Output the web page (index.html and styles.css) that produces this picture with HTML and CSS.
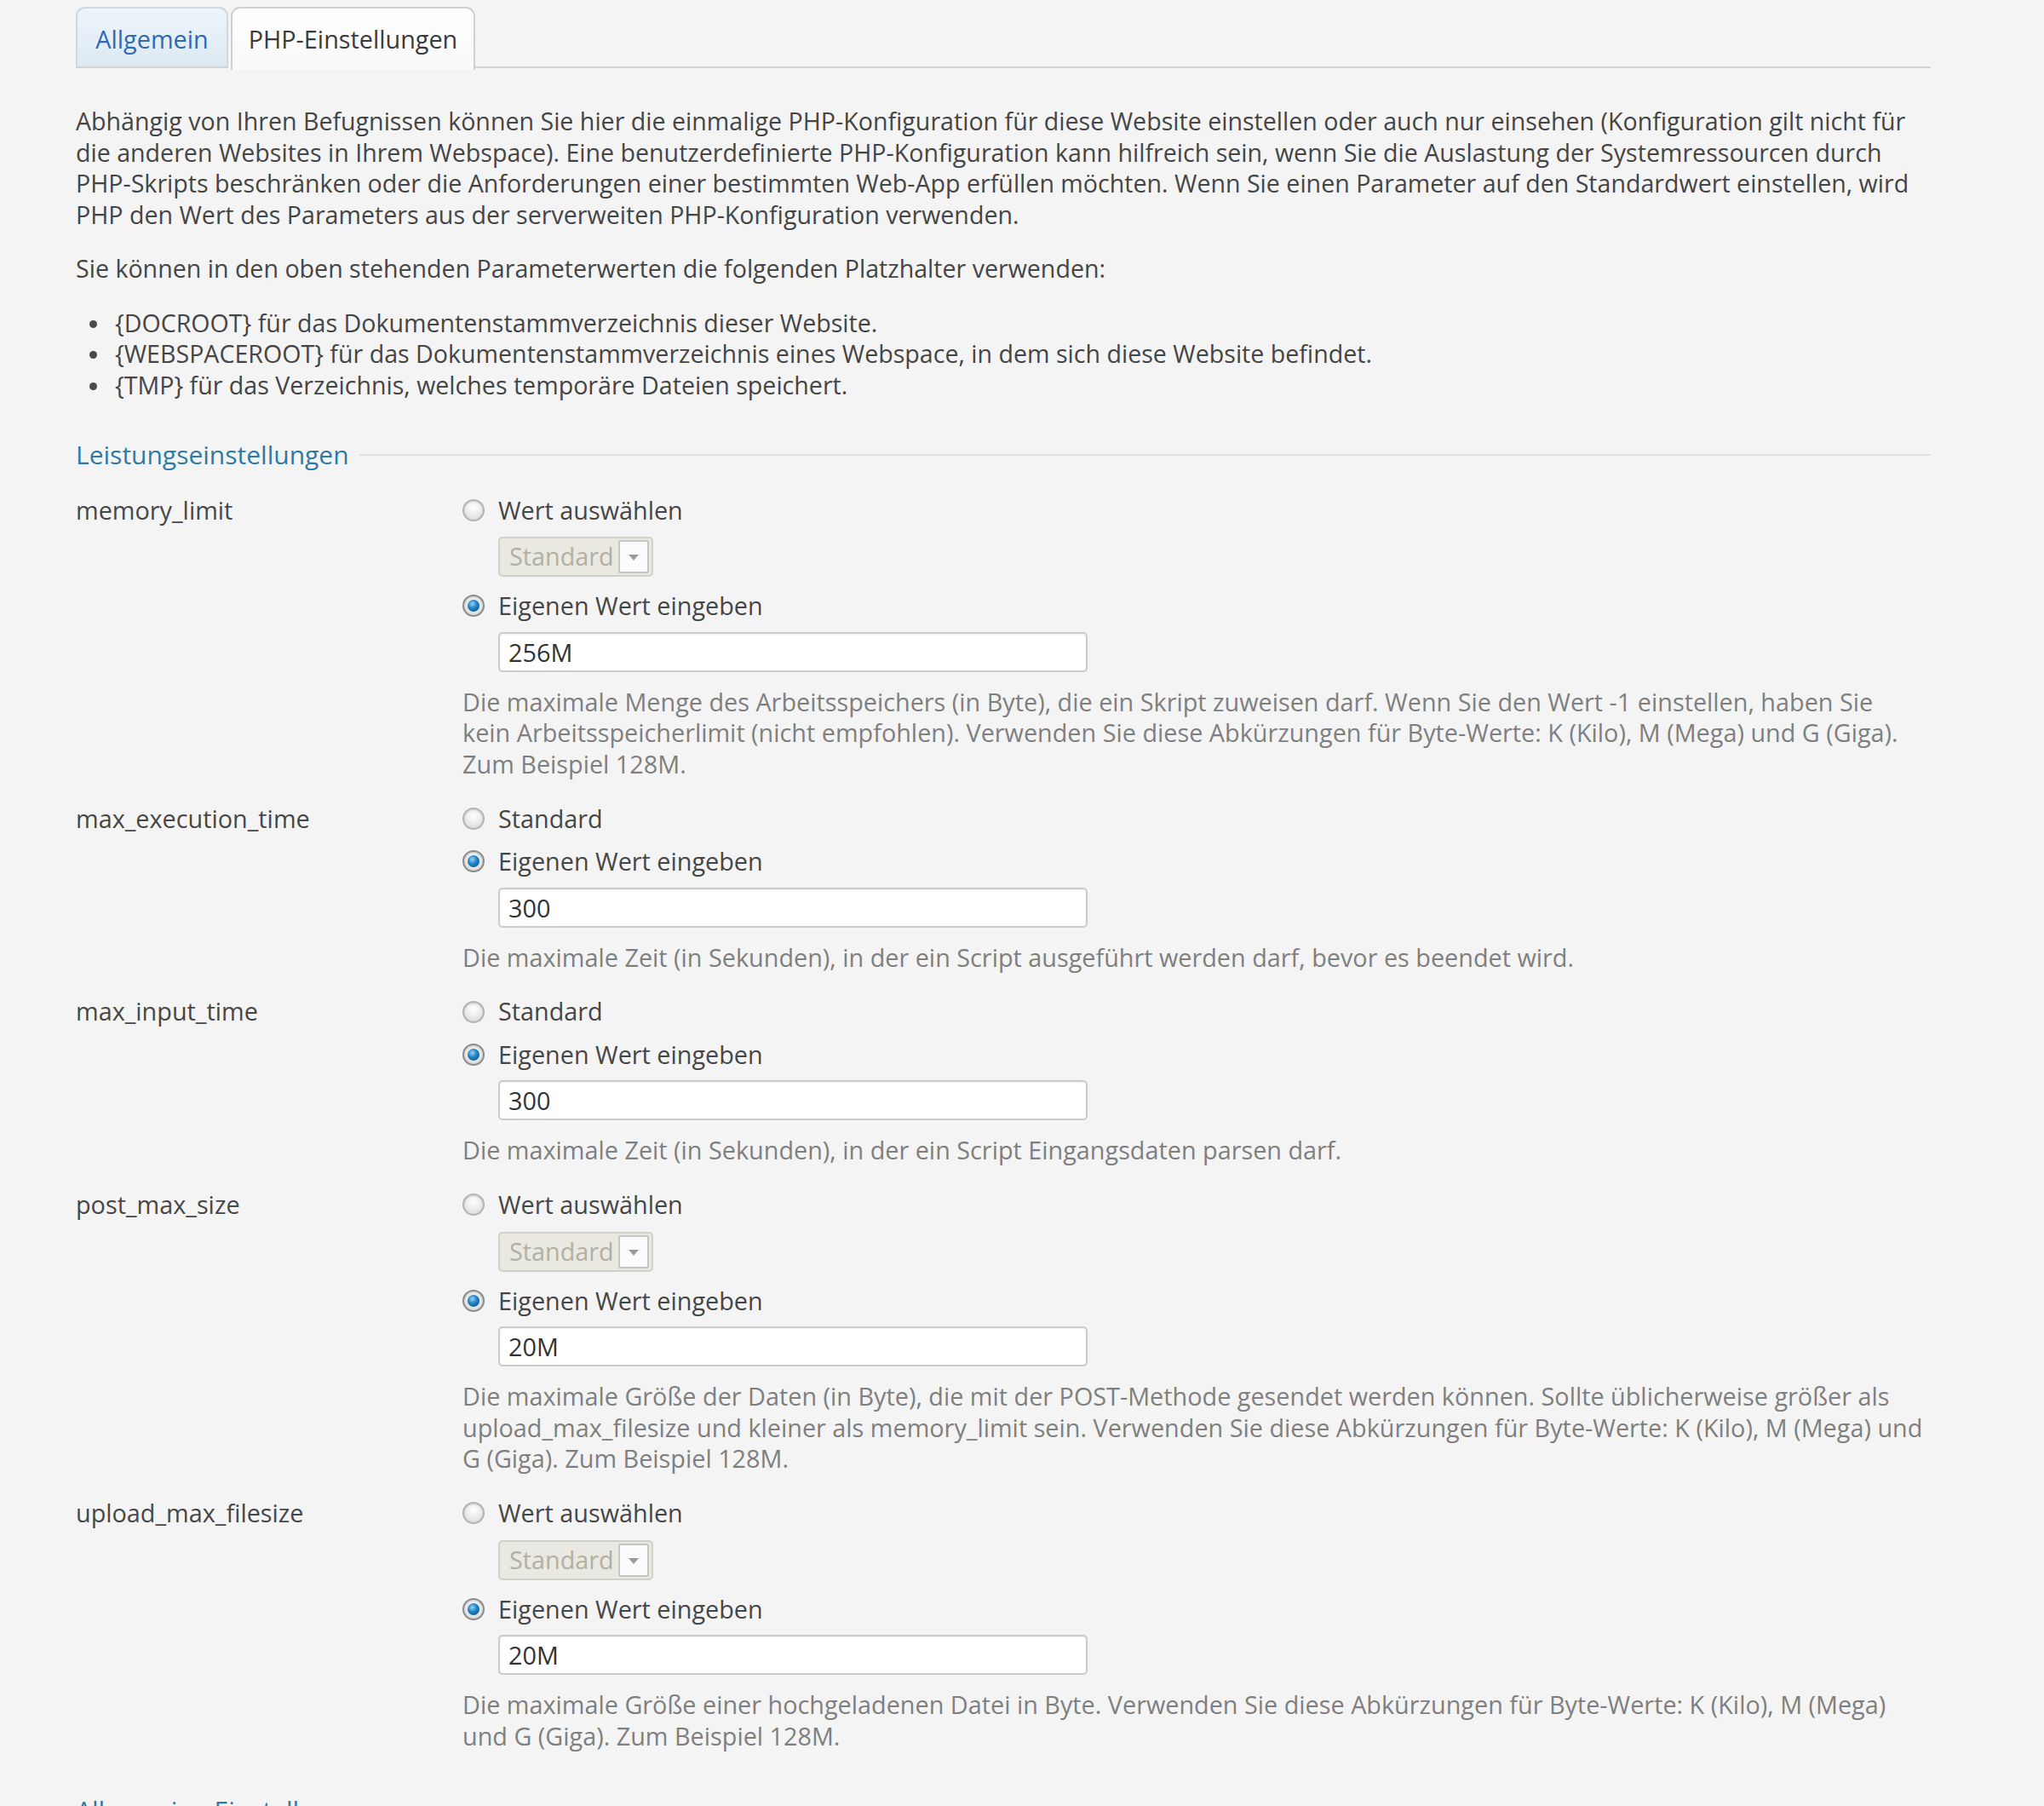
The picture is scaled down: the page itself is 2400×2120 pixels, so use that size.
FILE: index.html
```html
<!DOCTYPE html>
<html lang="de">
<head>
<meta charset="utf-8">
<title>PHP-Einstellungen</title>
<link rel="stylesheet" href="styles.css">
</head>
<body>
<div class="page">
  <div class="tabs">
    <a class="tab tab-inactive" href="#">Allgemein</a>
    <a class="tab tab-active" href="#">PHP-Einstellungen</a>
    <div class="tab-line"></div>
  </div>

  <p class="intro">Abhängig von Ihren Befugnissen können Sie hier die einmalige PHP-Konfiguration für diese Website einstellen oder auch nur einsehen (Konfiguration gilt nicht für die anderen Websites in Ihrem Webspace). Eine benutzerdefinierte PHP-Konfiguration kann hilfreich sein, wenn Sie die Auslastung der Systemressourcen durch PHP-Skripts beschränken oder die Anforderungen einer bestimmten Web-App erfüllen möchten. Wenn Sie einen Parameter auf den Standardwert einstellen, wird PHP den Wert des Parameters aus der serverweiten PHP-Konfiguration verwenden.</p>
  <p class="intro intro-2">Sie können in den oben stehenden Parameterwerten die folgenden Platzhalter verwenden:</p>
  <ul class="placeholders">
    <li>{DOCROOT} für das Dokumentenstammverzeichnis dieser Website.</li>
    <li>{WEBSPACEROOT} für das Dokumentenstammverzeichnis eines Webspace, in dem sich diese Website befindet.</li>
    <li>{TMP} für das Verzeichnis, welches temporäre Dateien speichert.</li>
  </ul>

  <div class="section-title"><span>Leistungseinstellungen</span></div>

  <div class="row">
    <div class="label">memory_limit</div>
    <div class="field">
      <div class="opt"><span class="radio"></span>Wert auswählen</div>
      <div class="select"><span class="select-text">Standard</span><span class="select-arrow"></span></div>
      <div class="opt"><span class="radio radio-on"></span>Eigenen Wert eingeben</div>
      <div class="input">256M</div>
      <p class="hint">Die maximale Menge des Arbeitsspeichers (in Byte), die ein Skript zuweisen darf. Wenn Sie den Wert -1 einstellen, haben Sie<br>kein Arbeitsspeicherlimit (nicht empfohlen). Verwenden Sie diese Abkürzungen für Byte-Werte: K (Kilo), M (Mega) und G (Giga).<br>Zum Beispiel 128M.</p>
    </div>
  </div>

  <div class="row">
    <div class="label">max_execution_time</div>
    <div class="field">
      <div class="opt"><span class="radio"></span>Standard</div>
      <div class="opt"><span class="radio radio-on"></span>Eigenen Wert eingeben</div>
      <div class="input">300</div>
      <p class="hint">Die maximale Zeit (in Sekunden), in der ein Script ausgeführt werden darf, bevor es beendet wird.</p>
    </div>
  </div>

  <div class="row">
    <div class="label">max_input_time</div>
    <div class="field">
      <div class="opt"><span class="radio"></span>Standard</div>
      <div class="opt"><span class="radio radio-on"></span>Eigenen Wert eingeben</div>
      <div class="input">300</div>
      <p class="hint">Die maximale Zeit (in Sekunden), in der ein Script Eingangsdaten parsen darf.</p>
    </div>
  </div>

  <div class="row">
    <div class="label">post_max_size</div>
    <div class="field">
      <div class="opt"><span class="radio"></span>Wert auswählen</div>
      <div class="select"><span class="select-text">Standard</span><span class="select-arrow"></span></div>
      <div class="opt"><span class="radio radio-on"></span>Eigenen Wert eingeben</div>
      <div class="input">20M</div>
      <p class="hint">Die maximale Größe der Daten (in Byte), die mit der POST-Methode gesendet werden können. Sollte üblicherweise größer als<br>upload_max_filesize und kleiner als memory_limit sein. Verwenden Sie diese Abkürzungen für Byte-Werte: K (Kilo), M (Mega) und<br>G (Giga). Zum Beispiel 128M.</p>
    </div>
  </div>

  <div class="row">
    <div class="label">upload_max_filesize</div>
    <div class="field">
      <div class="opt"><span class="radio"></span>Wert auswählen</div>
      <div class="select"><span class="select-text">Standard</span><span class="select-arrow"></span></div>
      <div class="opt"><span class="radio radio-on"></span>Eigenen Wert eingeben</div>
      <div class="input">20M</div>
      <p class="hint">Die maximale Größe einer hochgeladenen Datei in Byte. Verwenden Sie diese Abkürzungen für Byte-Werte: K (Kilo), M (Mega)<br>und G (Giga). Zum Beispiel 128M.</p>
    </div>
  </div>

  <div class="section-title section-title-2"><span>Allgemeine Einstellungen</span></div>
</div>
</body>
</html>
```
FILE: styles.css
```css
html, body {
  margin: 0;
  padding: 0;
  background: #f4f4f4;
}
body {
  font-family: "Open Sans", "DejaVu Sans", sans-serif;
  font-size: 28.8px;
  line-height: 36.5px;
  color: #454545;
}
.page {
  width: 2178px;
  padding: 8px 0 0 89px;
}

/* Tabs */
.tabs {
  display: flex;
  align-items: flex-end;
  height: 72px;
}
.tab {
  display: block;
  box-sizing: border-box;
  height: 72px;
  padding: 18px 0 0;
  text-decoration: none;
  text-align: center;
  border: 2px solid #d2d6da;
  border-bottom: none;
  border-radius: 11px 11px 0 0;
  white-space: nowrap;
}
.tab-inactive {
  width: 179px;
  color: #2f69b4;
  background: linear-gradient(#eef5fb, #dce9f3);
  border-color: #cdd8e1;
  border-bottom: 2px solid #cfd3d6;
  margin-right: 3px;
}
.tab-active {
  width: 287px;
  color: #3a3a3a;
  background: linear-gradient(#ffffff, #f9f9f9);
  border-color: #d0d0d0;
  height: 74px;
  margin-bottom: -2px;
}
.tab-line {
  flex: 1;
  height: 2px;
  background: #d3d3d3;
}

/* Intro */
.intro {
  margin: 44px 0 0 0;
  font-size: 28.6px;
}
.intro-2 {
  margin-top: 27px;
}
.placeholders {
  margin: 27px 0 0 0;
  padding: 0 0 0 46px;
  list-style: none;
  font-size: 28.6px;
}
.placeholders li::before {
  content: "";
  display: inline-block;
  width: 9px;
  height: 9px;
  border-radius: 50%;
  background: #4a4a4a;
  margin-left: -30px;
  margin-right: 21px;
  vertical-align: 5px;
}

/* Section title */
.section-title {
  display: flex;
  align-items: center;
  margin-top: 46px;
  font-size: 30px;
  color: #2c7aa8;
}
.section-title::after {
  content: "";
  flex: 1;
  height: 2px;
  background: #dfdfdf;
  margin-left: 12px;
}
.section-title-2 {
  margin-top: 50px;
}

/* Rows */
.row {
  display: flex;
  margin-top: 28px;
}
.row + .row {
  margin-top: 27px;
}
.label {
  width: 454px;
  flex: none;
  color: #474747;
}
.field {
  flex: 1;
}
.opt {
  display: flex;
  align-items: center;
  color: #464646;
}
.opt + .opt {
  margin-top: 14px;
}
.radio {
  box-sizing: border-box;
  width: 26px;
  height: 26px;
  border-radius: 50%;
  margin-right: 16px;
  flex: none;
  border: 2px solid #b4b4b4;
  background: radial-gradient(circle at 50% 35%, #ffffff 0%, #eeeeee 45%, #d2d2d2 100%);
  box-shadow: inset 0 1px 2px rgba(0,0,0,0.15);
  position: relative;
}
.radio-on {
  border-color: #8c8c8c;
  background: radial-gradient(circle at 50% 40%, #ffffff 0%, #e4e4e4 60%, #c2c2c2 100%);
}
.radio-on::after {
  content: "";
  position: absolute;
  left: 4px;
  top: 4px;
  width: 14px;
  height: 14px;
  border-radius: 50%;
  background: radial-gradient(circle at 40% 35%, #9ad6f7 0%, #2387c8 40%, #0a4679 100%);
}

/* Select */
.select {
  box-sizing: border-box;
  display: flex;
  align-items: center;
  justify-content: space-between;
  width: 182px;
  height: 47px;
  margin: 13px 0 16px 42px;
  padding: 0 3px 0 11px;
  background: #e9e8e1;
  border: 2px solid #cfcfcb;
  border-radius: 5px;
  color: #b2b0a3;
}
.select-arrow {
  box-sizing: border-box;
  position: relative;
  width: 36px;
  height: 39px;
  background: #fbfbfb;
  border: 2px solid #c6c6c6;
  border-radius: 2px;
}
.select-arrow::after {
  content: "";
  position: absolute;
  left: 10px;
  top: 15px;
  border-left: 6px solid transparent;
  border-right: 6px solid transparent;
  border-top: 7px solid #9a9a9a;
}

/* Input */
.input {
  box-sizing: border-box;
  width: 692px;
  height: 47px;
  margin: 12px 0 0 42px;
  padding: 4px 10px 0;
  background: #ffffff;
  border: 2px solid #cbcbcb;
  border-radius: 5px;
  box-shadow: inset 0 1px 2px rgba(0,0,0,0.06);
  color: #333333;
  line-height: 36px;
}

/* Hint */
.hint {
  margin: 17px 0 0 0;
  color: #7f7f7f;
  line-height: 36.7px;
}
```
